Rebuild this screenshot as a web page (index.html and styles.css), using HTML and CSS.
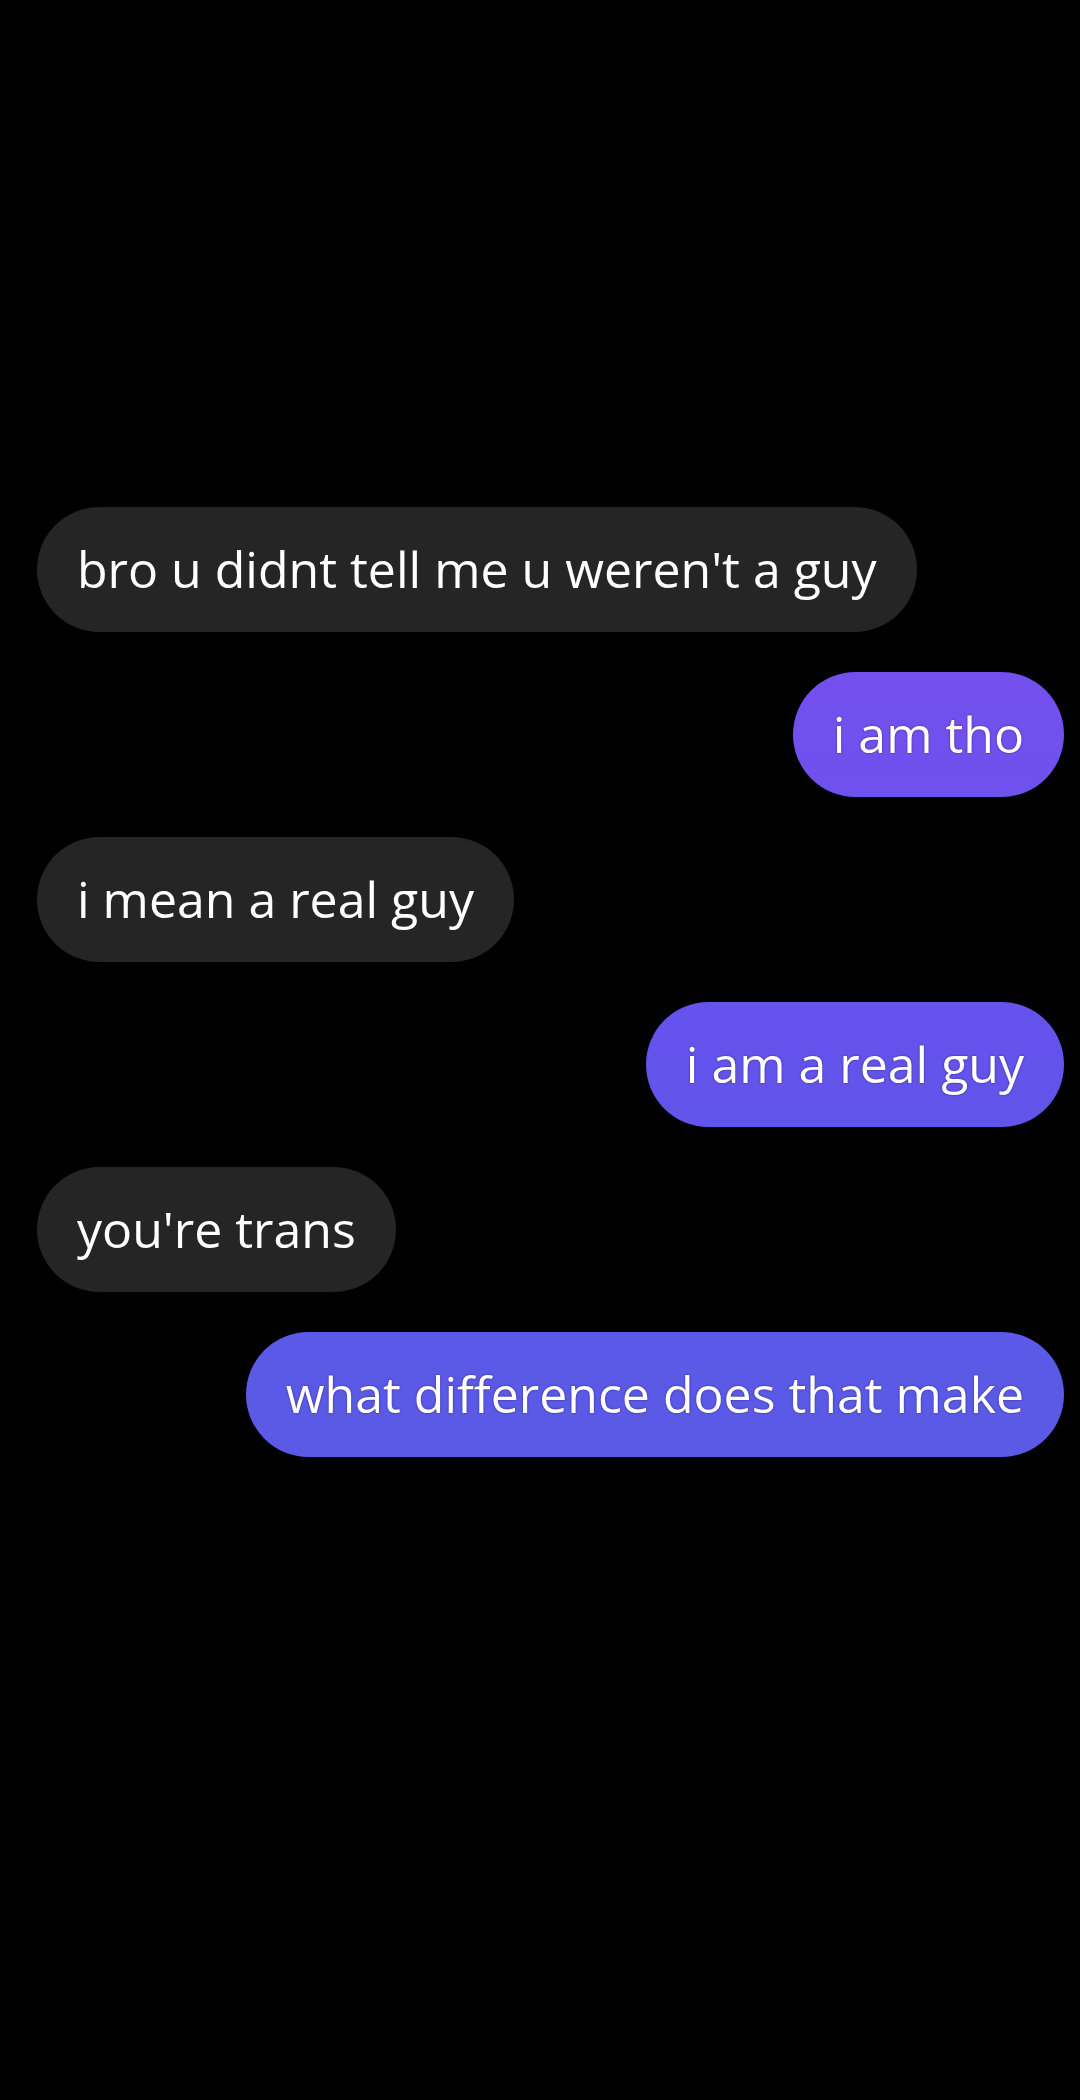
FILE: index.html
```html
<!DOCTYPE html>
<html>
<head>
<meta charset="utf-8">
<link rel="stylesheet" href="styles.css">
</head>
<body>
<main class="chat">
  <div class="msg in">bro u didnt tell me u weren't a guy</div>
  <div class="msg out">i am tho</div>
  <div class="msg in">i mean a real guy</div>
  <div class="msg out">i am a real guy</div>
  <div class="msg in">you're trans</div>
  <div class="msg out">what difference does that make</div>
</main>
</body>
</html>
```
FILE: styles.css
```css
html, body {
  margin: 0;
  padding: 0;
  background: #000;
  width: 1080px;
  height: 2100px;
  overflow: hidden;
}
.chat {
  display: flex;
  flex-direction: column;
  gap: 40px;
  padding: 507px 16px 0 37px;
  font-family: "Open Sans", Roboto, sans-serif;
}
.msg {
  height: 125px;
  line-height: 125px;
  padding: 0 40px;
  border-radius: 63px;
  color: #fff;
  font-size: 50px;
  white-space: nowrap;
  box-sizing: border-box;
}
.in {
  align-self: flex-start;
  background: #252525;
}
.out {
  align-self: flex-end;
  background: linear-gradient(180deg, #7a4ef0 0px, #7350ee 700px, #6353ec 1050px, #5a5ae6 1400px) fixed;
  text-shadow: 0 0 2px rgba(40, 20, 90, 0.8);
}
```
